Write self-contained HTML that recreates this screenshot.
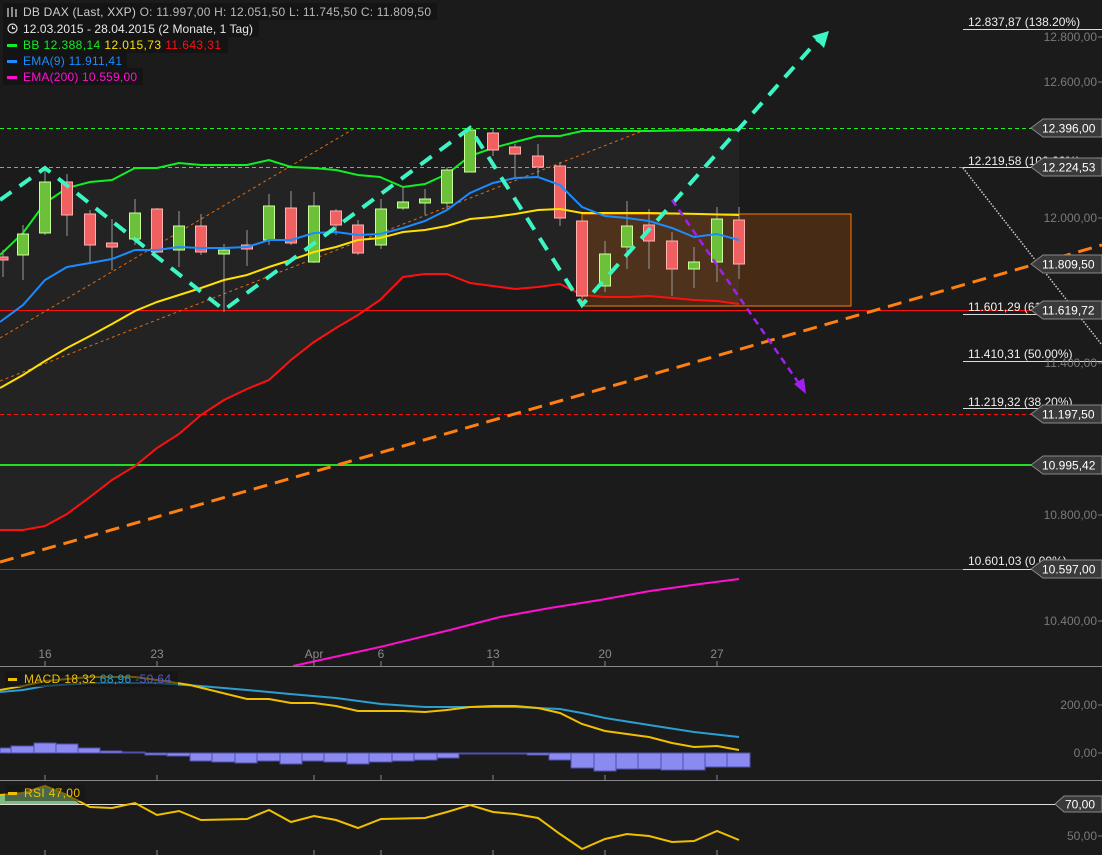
<!DOCTYPE html>
<html><head><meta charset="utf-8"><style>
body{margin:0;background:#1b1b1b;overflow:hidden}
svg{display:block;font-family:"Liberation Sans",sans-serif}
</style></head><body>
<svg width="1102" height="855" viewBox="0 0 1102 855" xmlns="http://www.w3.org/2000/svg">
<rect width="1102" height="855" fill="#1b1b1b"/>
<polygon fill="#232323" points="0,255 23,233 45,203 67,188 90,182 112,180 135,168 157,168 179,163 201,165 224,165 247,165 269,160 291,167 314,168 336,170 358,175 380,177 403,187 425,184 447,174 470,156 493,148 515,142 538,136 560,136 582,131 605,131 650,131 700,130 739,130 739,304 717,301 694,300 672,298 649,296 627,297 605,297 582,295 560,284 538,287 515,289 493,286 470,283 447,274 425,274 403,277 380,300 358,315 336,328 314,342 291,360 269,380 247,389 224,400 201,415 179,434 157,448 135,466 112,480 90,497 67,514 45,526 23,530 0,530"/>
<rect x="582" y="214" width="269" height="92" fill="rgba(255,110,0,0.2)" stroke="#ff7a00" stroke-width="1"/>
<line x1="0" y1="128.5" x2="1032" y2="128.5" stroke="#22ee22" stroke-dasharray="4,3"/>
<line x1="0" y1="167.5" x2="1032" y2="167.5" stroke="#22ee22" stroke-dasharray="4,3"/>
<line x1="0" y1="310.5" x2="1032" y2="310.5" stroke="#ff1010"/>
<line x1="0" y1="414.5" x2="1032" y2="414.5" stroke="#ff1010" stroke-dasharray="4,3"/>
<line x1="0" y1="465" x2="1032" y2="465" stroke="#22dd22" stroke-width="2"/>
<line x1="0" y1="569.5" x2="1032" y2="569.5" stroke="#e01010"/>
<line x1="0" y1="338" x2="355" y2="128" stroke="#e06a10" stroke-dasharray="3,3"/>
<line x1="0" y1="381" x2="645" y2="130" stroke="#e06a10" stroke-dasharray="3,3"/>
<g stroke="#dddddd" stroke-width="1">
<line x1="963" y1="29.5" x2="1102" y2="29.5"/>
<line x1="963" y1="167.5" x2="1102" y2="167.5"/>
<line x1="963" y1="314.5" x2="1102" y2="314.5"/>
<line x1="963" y1="361.5" x2="1102" y2="361.5"/>
<line x1="963" y1="408.5" x2="1102" y2="408.5"/>
<line x1="963" y1="569.5" x2="1102" y2="569.5"/>
</g>
<line x1="963" y1="168" x2="1102" y2="345" stroke="#cccccc" stroke-width="1.5" stroke-dasharray="1.5,1.5"/>
<g fill="#eeeeee" font-size="12">
<text x="968" y="26">12.837,87 (138.20%)</text>
<text x="968" y="165">12.219,58 (100.00%)</text>
<text x="968" y="311">11.601,29 (61.80%)</text>
<text x="968" y="358">11.410,31 (50.00%)</text>
<text x="968" y="406">11.219,32 (38.20%)</text>
<text x="968" y="565">10.601,03 (0.00%)</text>
</g>
<g fill="#7a7a7a" font-size="12" text-anchor="end">
<text x="1097" y="41">12.800,00</text>
<text x="1097" y="86">12.600,00</text>
<text x="1097" y="222">12.000,00</text>
<text x="1097" y="367">11.400,00</text>
<text x="1097" y="519">10.800,00</text>
<text x="1097" y="625">10.400,00</text>
<text x="1097" y="709">200,00</text>
<text x="1097" y="757">0,00</text>
<text x="1097" y="840">50,00</text>
</g>
<g stroke="#7a7a7a"><line x1="1098" y1="37" x2="1102" y2="37"/><line x1="1098" y1="82" x2="1102" y2="82"/><line x1="1098" y1="218" x2="1102" y2="218"/><line x1="1098" y1="363" x2="1102" y2="363"/><line x1="1098" y1="515" x2="1102" y2="515"/><line x1="1098" y1="621" x2="1102" y2="621"/><line x1="1098" y1="705" x2="1102" y2="705"/><line x1="1098" y1="753" x2="1102" y2="753"/><line x1="1098" y1="836" x2="1102" y2="836"/></g>
<polyline fill="none" stroke="#11ee22" stroke-width="2" points="0,255 23,233 45,203 67,188 90,182 112,180 135,168 157,168 179,163 201,165 224,165 247,165 269,160 291,167 314,168 336,170 358,175 380,177 403,187 425,184 447,174 470,156 493,148 515,142 538,136 560,136 582,131 605,131 650,131 700,130 739,130"/>
<polyline fill="none" stroke="#ff1010" stroke-width="2" points="0,530 23,530 45,526 67,514 90,497 112,480 135,466 157,448 179,434 201,415 224,400 247,389 269,380 291,360 314,342 336,328 358,315 380,300 403,277 425,274 447,274 470,283 493,286 515,289 538,287 560,284 582,295 605,297 627,297 649,296 672,298 694,300 717,301 739,304"/>
<g stroke="#999" stroke-width="1">
<line x1="3" y1="250" x2="3" y2="277"/><line x1="23" y1="225" x2="23" y2="280"/><line x1="45" y1="170" x2="45" y2="235"/><line x1="67" y1="174" x2="67" y2="236"/><line x1="90" y1="210" x2="90" y2="262"/><line x1="112" y1="219" x2="112" y2="270"/><line x1="135" y1="199" x2="135" y2="245"/><line x1="157" y1="208" x2="157" y2="253"/><line x1="179" y1="211" x2="179" y2="267"/><line x1="201" y1="214" x2="201" y2="255"/><line x1="224" y1="244" x2="224" y2="312"/><line x1="247" y1="230" x2="247" y2="266"/><line x1="269" y1="194" x2="269" y2="245"/><line x1="291" y1="191" x2="291" y2="245"/><line x1="314" y1="192" x2="314" y2="263"/><line x1="336" y1="209" x2="336" y2="235"/><line x1="358" y1="220" x2="358" y2="255"/><line x1="381" y1="199" x2="381" y2="249"/><line x1="403" y1="186" x2="403" y2="210"/><line x1="425" y1="189" x2="425" y2="215"/><line x1="447" y1="167" x2="447" y2="209"/><line x1="493" y1="128" x2="493" y2="156"/><line x1="515" y1="144" x2="515" y2="177"/><line x1="538" y1="144" x2="538" y2="176"/><line x1="560" y1="162" x2="560" y2="226"/><line x1="605" y1="241" x2="605" y2="292"/><line x1="627" y1="201" x2="627" y2="269"/><line x1="649" y1="209" x2="649" y2="269"/><line x1="672" y1="232" x2="672" y2="296"/><line x1="694" y1="247" x2="694" y2="288"/><line x1="717" y1="207" x2="717" y2="282"/><line x1="739" y1="207" x2="739" y2="279"/>
</g>
<g fill="#f06060" stroke="#ffb0b0" stroke-width="1">
<rect x="-3" y="257" width="11" height="3"/><rect x="61.5" y="182" width="11" height="33"/><rect x="84.5" y="214" width="11" height="31"/><rect x="106.5" y="243" width="11" height="4"/><rect x="151.5" y="209" width="11" height="43"/><rect x="195.5" y="226" width="11" height="26"/><rect x="241.5" y="245" width="11" height="4"/><rect x="285.5" y="208" width="11" height="35"/><rect x="330.5" y="211" width="11" height="14"/><rect x="352.5" y="225" width="11" height="28"/><rect x="487.5" y="133" width="11" height="17"/><rect x="509.5" y="147" width="11" height="7"/><rect x="532.5" y="156" width="11" height="11"/><rect x="554.5" y="166" width="11" height="52"/><rect x="576.5" y="221" width="11" height="75"/><rect x="643.5" y="225" width="11" height="16"/><rect x="666.5" y="241" width="11" height="28"/><rect x="733.5" y="220" width="11" height="44"/>
</g>
<g fill="#6cc03a" stroke="#c8ff9a" stroke-width="1">
<rect x="17.5" y="234" width="11" height="21"/><rect x="39.5" y="182" width="11" height="51"/><rect x="129.5" y="213" width="11" height="26"/><rect x="173.5" y="226" width="11" height="24"/><rect x="218.5" y="250" width="11" height="4"/><rect x="263.5" y="206" width="11" height="34"/><rect x="308.5" y="206" width="11" height="56"/><rect x="375.5" y="209" width="11" height="36"/><rect x="397.5" y="202" width="11" height="6"/><rect x="419.5" y="199" width="11" height="4"/><rect x="441.5" y="170" width="11" height="33"/><rect x="464.5" y="130" width="11" height="42"/><rect x="599.5" y="254" width="11" height="32"/><rect x="621.5" y="226" width="11" height="21"/><rect x="688.5" y="262" width="11" height="7"/><rect x="711.5" y="219" width="11" height="43"/>
</g>
<polyline fill="none" stroke="#ffe000" stroke-width="2" points="0,388 23,375 45,361 67,348 90,336 112,324 135,311 157,302 179,295 201,288 224,280 247,275 269,267 291,260 314,252 336,247 358,240 380,238 403,232 425,230 447,226 470,219 493,217 515,214 538,210 560,209 582,213 605,213 649,213 700,214 739,215"/>
<polyline fill="none" stroke="#1a8cff" stroke-width="2" points="0,322 23,305 45,280 67,267 90,263 112,259 135,250 157,250 179,247 201,248 224,248 247,247 269,240 291,240 314,233 336,232 358,235 380,234 403,228 425,221 447,210 470,193 493,183 515,178 538,177 560,185 582,207 605,216 627,218 649,221 672,228 694,237 717,234 739,240"/>
<polyline fill="none" stroke="#ff10d0" stroke-width="2" points="293,666 380,647 450,630 500,617 550,608 600,600 650,591 700,584 739,579"/>
<line x1="0" y1="562" x2="1102" y2="245" stroke="#ff8010" stroke-width="3" stroke-dasharray="14,8"/>
<polyline fill="none" stroke="#3cf5c3" stroke-width="4" stroke-dasharray="14,10" points="0,200 45,168 224,310 470,128 582,305 818,40"/>
<polygon fill="#3cf5c3" points="829,31 812,36 824,48"/>
<line x1="672" y1="200" x2="800" y2="385" stroke="#a020f0" stroke-width="2.5" stroke-dasharray="7,5"/>
<polygon fill="#a020f0" points="806,394 794,384 804,378"/>
<g font-size="12" fill="#ffffff">
<g transform="translate(0,128)"><path d="M1031,0 L1043,-9 L1102,-9 L1102,9 L1043,9 Z" fill="#3a3a3a" stroke="#888"/><text x="1042" y="4.5">12.396,00</text></g>
<g transform="translate(0,167)"><path d="M1031,0 L1043,-9 L1102,-9 L1102,9 L1043,9 Z" fill="#3a3a3a" stroke="#888"/><text x="1042" y="4.5">12.224,53</text></g>
<g transform="translate(0,264)"><path d="M1031,0 L1043,-9 L1102,-9 L1102,9 L1043,9 Z" fill="#3a3a3a" stroke="#888"/><text x="1042" y="4.5">11.809,50</text></g>
<g transform="translate(0,310)"><path d="M1031,0 L1043,-9 L1102,-9 L1102,9 L1043,9 Z" fill="#3a3a3a" stroke="#888"/><text x="1042" y="4.5">11.619,72</text></g>
<g transform="translate(0,414)"><path d="M1031,0 L1043,-9 L1102,-9 L1102,9 L1043,9 Z" fill="#3a3a3a" stroke="#888"/><text x="1042" y="4.5">11.197,50</text></g>
<g transform="translate(0,465)"><path d="M1031,0 L1043,-9 L1102,-9 L1102,9 L1043,9 Z" fill="#3a3a3a" stroke="#888"/><text x="1042" y="4.5">10.995,42</text></g>
<g transform="translate(0,569)"><path d="M1031,0 L1043,-9 L1102,-9 L1102,9 L1043,9 Z" fill="#3a3a3a" stroke="#888"/><text x="1042" y="4.5">10.597,00</text></g>
<g transform="translate(0,804)"><path d="M1055,0 L1064,-8 L1102,-8 L1102,8 L1064,8 Z" fill="#3a3a3a" stroke="#888"/><text x="1065" y="4.5">70,00</text></g>
</g>
<g fill="#8a8a8a" font-size="12" text-anchor="middle">
<text x="45" y="658">16</text><text x="157" y="658">23</text><text x="314" y="658">Apr</text><text x="381" y="658">6</text><text x="493" y="658">13</text><text x="605" y="658">20</text><text x="717" y="658">27</text>
</g>
<line x1="0" y1="666.5" x2="1102" y2="666.5" stroke="#888"/>
<line x1="0" y1="780.5" x2="1102" y2="780.5" stroke="#888"/>
<g stroke="#888">
<line x1="45" y1="661" x2="45" y2="666"/><line x1="157" y1="661" x2="157" y2="666"/><line x1="314" y1="661" x2="314" y2="666"/><line x1="381" y1="661" x2="381" y2="666"/><line x1="493" y1="661" x2="493" y2="666"/><line x1="605" y1="661" x2="605" y2="666"/><line x1="717" y1="661" x2="717" y2="666"/>
<line x1="45" y1="775" x2="45" y2="780"/><line x1="157" y1="775" x2="157" y2="780"/><line x1="314" y1="775" x2="314" y2="780"/><line x1="381" y1="775" x2="381" y2="780"/><line x1="493" y1="775" x2="493" y2="780"/><line x1="605" y1="775" x2="605" y2="780"/><line x1="717" y1="775" x2="717" y2="780"/>
<line x1="45" y1="850" x2="45" y2="855"/><line x1="157" y1="850" x2="157" y2="855"/><line x1="314" y1="850" x2="314" y2="855"/><line x1="381" y1="850" x2="381" y2="855"/><line x1="493" y1="850" x2="493" y2="855"/><line x1="605" y1="850" x2="605" y2="855"/><line x1="717" y1="850" x2="717" y2="855"/>
</g>
<g fill="#8a8af0" stroke="#5050b0" stroke-width="1">
<rect x="0" y="748" width="11" height="5"/><rect x="11" y="746" width="23" height="7"/><rect x="34" y="743" width="22" height="10"/><rect x="56" y="744" width="22" height="9"/><rect x="78" y="748" width="22" height="5"/><rect x="100" y="751" width="22" height="2"/><rect x="122" y="752" width="23" height="1"/>
<rect x="145" y="753" width="22" height="2"/><rect x="167" y="753" width="23" height="3"/><rect x="190" y="753" width="22" height="8"/><rect x="212" y="753" width="23" height="9"/><rect x="235" y="753" width="22" height="10"/><rect x="257" y="753" width="23" height="8"/><rect x="280" y="753" width="22" height="11"/><rect x="302" y="753" width="22" height="8"/><rect x="324" y="753" width="23" height="9"/><rect x="347" y="753" width="22" height="11"/><rect x="369" y="753" width="23" height="9"/><rect x="392" y="753" width="22" height="8"/><rect x="414" y="753" width="23" height="7"/><rect x="437" y="753" width="22" height="5"/><rect x="459" y="753" width="68" height="1"/><rect x="527" y="753" width="22" height="2"/><rect x="549" y="753" width="22" height="7"/><rect x="571" y="753" width="23" height="15"/><rect x="594" y="753" width="22" height="18"/><rect x="616" y="753" width="22" height="16"/><rect x="638" y="753" width="23" height="16"/><rect x="661" y="753" width="22" height="17"/><rect x="683" y="753" width="22" height="17"/><rect x="705" y="753" width="22" height="14"/><rect x="727" y="753" width="23" height="14"/>
</g>
<polyline fill="none" stroke="#2a9fd0" stroke-width="2" points="0,692 23,690 45,686 90,683 135,683 157,683 200,686 247,690 290,694 336,698 381,704 425,707 470,707 515,707 560,709 582,713 605,718 649,725 694,732 739,737"/>
<polyline fill="none" stroke="#f0c000" stroke-width="2" points="0,690 23,686 45,681 90,677 135,677 157,680 190,685 247,699 269,699 291,703 314,703 336,706 358,711 381,711 403,711 425,712 447,710 470,707 493,706 515,706 538,708 560,713 582,724 605,731 627,734 649,737 672,743 694,747 717,746 739,750"/>
<polygon fill="#8fd88f" opacity="0.85" points="0,795 23,793 45,786 67,795 80,804 0,804"/>
<line x1="0" y1="804.5" x2="1055" y2="804.5" stroke="#dddddd"/>
<polyline fill="none" stroke="#f0c000" stroke-width="2" points="0,795 23,793 45,786 67,795 90,807 112,808 135,803 157,815 179,811 201,820 247,819 269,810 291,822 314,816 336,820 358,828 381,819 425,818 447,812 470,805 493,812 515,814 538,818 560,834 582,849 605,839 627,834 649,836 672,842 694,841 717,831 739,840"/>
<g font-size="12">
<rect x="3" y="3" width="434" height="17" fill="#141414"/>
<rect x="3" y="20" width="256" height="17" fill="#141414"/>
<rect x="3" y="36" width="225" height="17" fill="#141414"/>
<rect x="3" y="52" width="124" height="17" fill="#141414"/>
<rect x="3" y="68" width="140" height="17" fill="#141414"/>
<g stroke="#ddd" stroke-width="1.2" fill="none"><line x1="8" y1="8" x2="8" y2="17"/><line x1="12" y1="7" x2="12" y2="17"/><line x1="16" y1="9" x2="16" y2="17"/><circle cx="12.5" cy="28.5" r="4.5"/><path d="M12.5,26 V28.5 H15"/></g>
<text x="23" y="16" fill="#b8b8b8" textLength="408" lengthAdjust="spacing"><tspan fill="#cfcfcf">DB DAX (Last, XXP)</tspan>  O: 11.997,00  H: 12.051,50  L: 11.745,50  C: 11.809,50</text>
<text x="23" y="33" fill="#e8e8e8" textLength="230" lengthAdjust="spacing">12.03.2015 - 28.04.2015 (2 Monate, 1 Tag)</text>
<rect x="7" y="44" width="10" height="3" fill="#11ee22"/>
<text x="23" y="49" fill="#11ee22" textLength="198" lengthAdjust="spacing">BB  12.388,14  <tspan fill="#ffe000">12.015,73</tspan>  <tspan fill="#ff1010">11.643,31</tspan></text>
<rect x="7" y="60" width="10" height="3" fill="#1a8cff"/>
<text x="23" y="65" fill="#1a8cff" textLength="99" lengthAdjust="spacing">EMA(9)  11.911,41</text>
<rect x="7" y="76" width="10" height="3" fill="#ff10d0"/>
<text x="23" y="81" fill="#ff10d0" textLength="114" lengthAdjust="spacing">EMA(200)  10.559,00</text>
<rect x="5" y="671" width="173" height="16" fill="#141414" opacity="0.6"/>
<rect x="8" y="678" width="9" height="3" fill="#f0c000"/>
<text x="24" y="683" fill="#f0c000" textLength="147" lengthAdjust="spacing">MACD  18,32  <tspan fill="#2a9fd0">68,96</tspan>  <tspan fill="#5a5ac0">-50,64</tspan></text>
<rect x="5" y="785" width="80" height="16" fill="#141414" opacity="0.5"/>
<rect x="8" y="792" width="9" height="3" fill="#f0c000"/>
<text x="24" y="797" fill="#f0c000" textLength="56" lengthAdjust="spacing">RSI  47,00</text>
</g>
</svg>
</body></html>
